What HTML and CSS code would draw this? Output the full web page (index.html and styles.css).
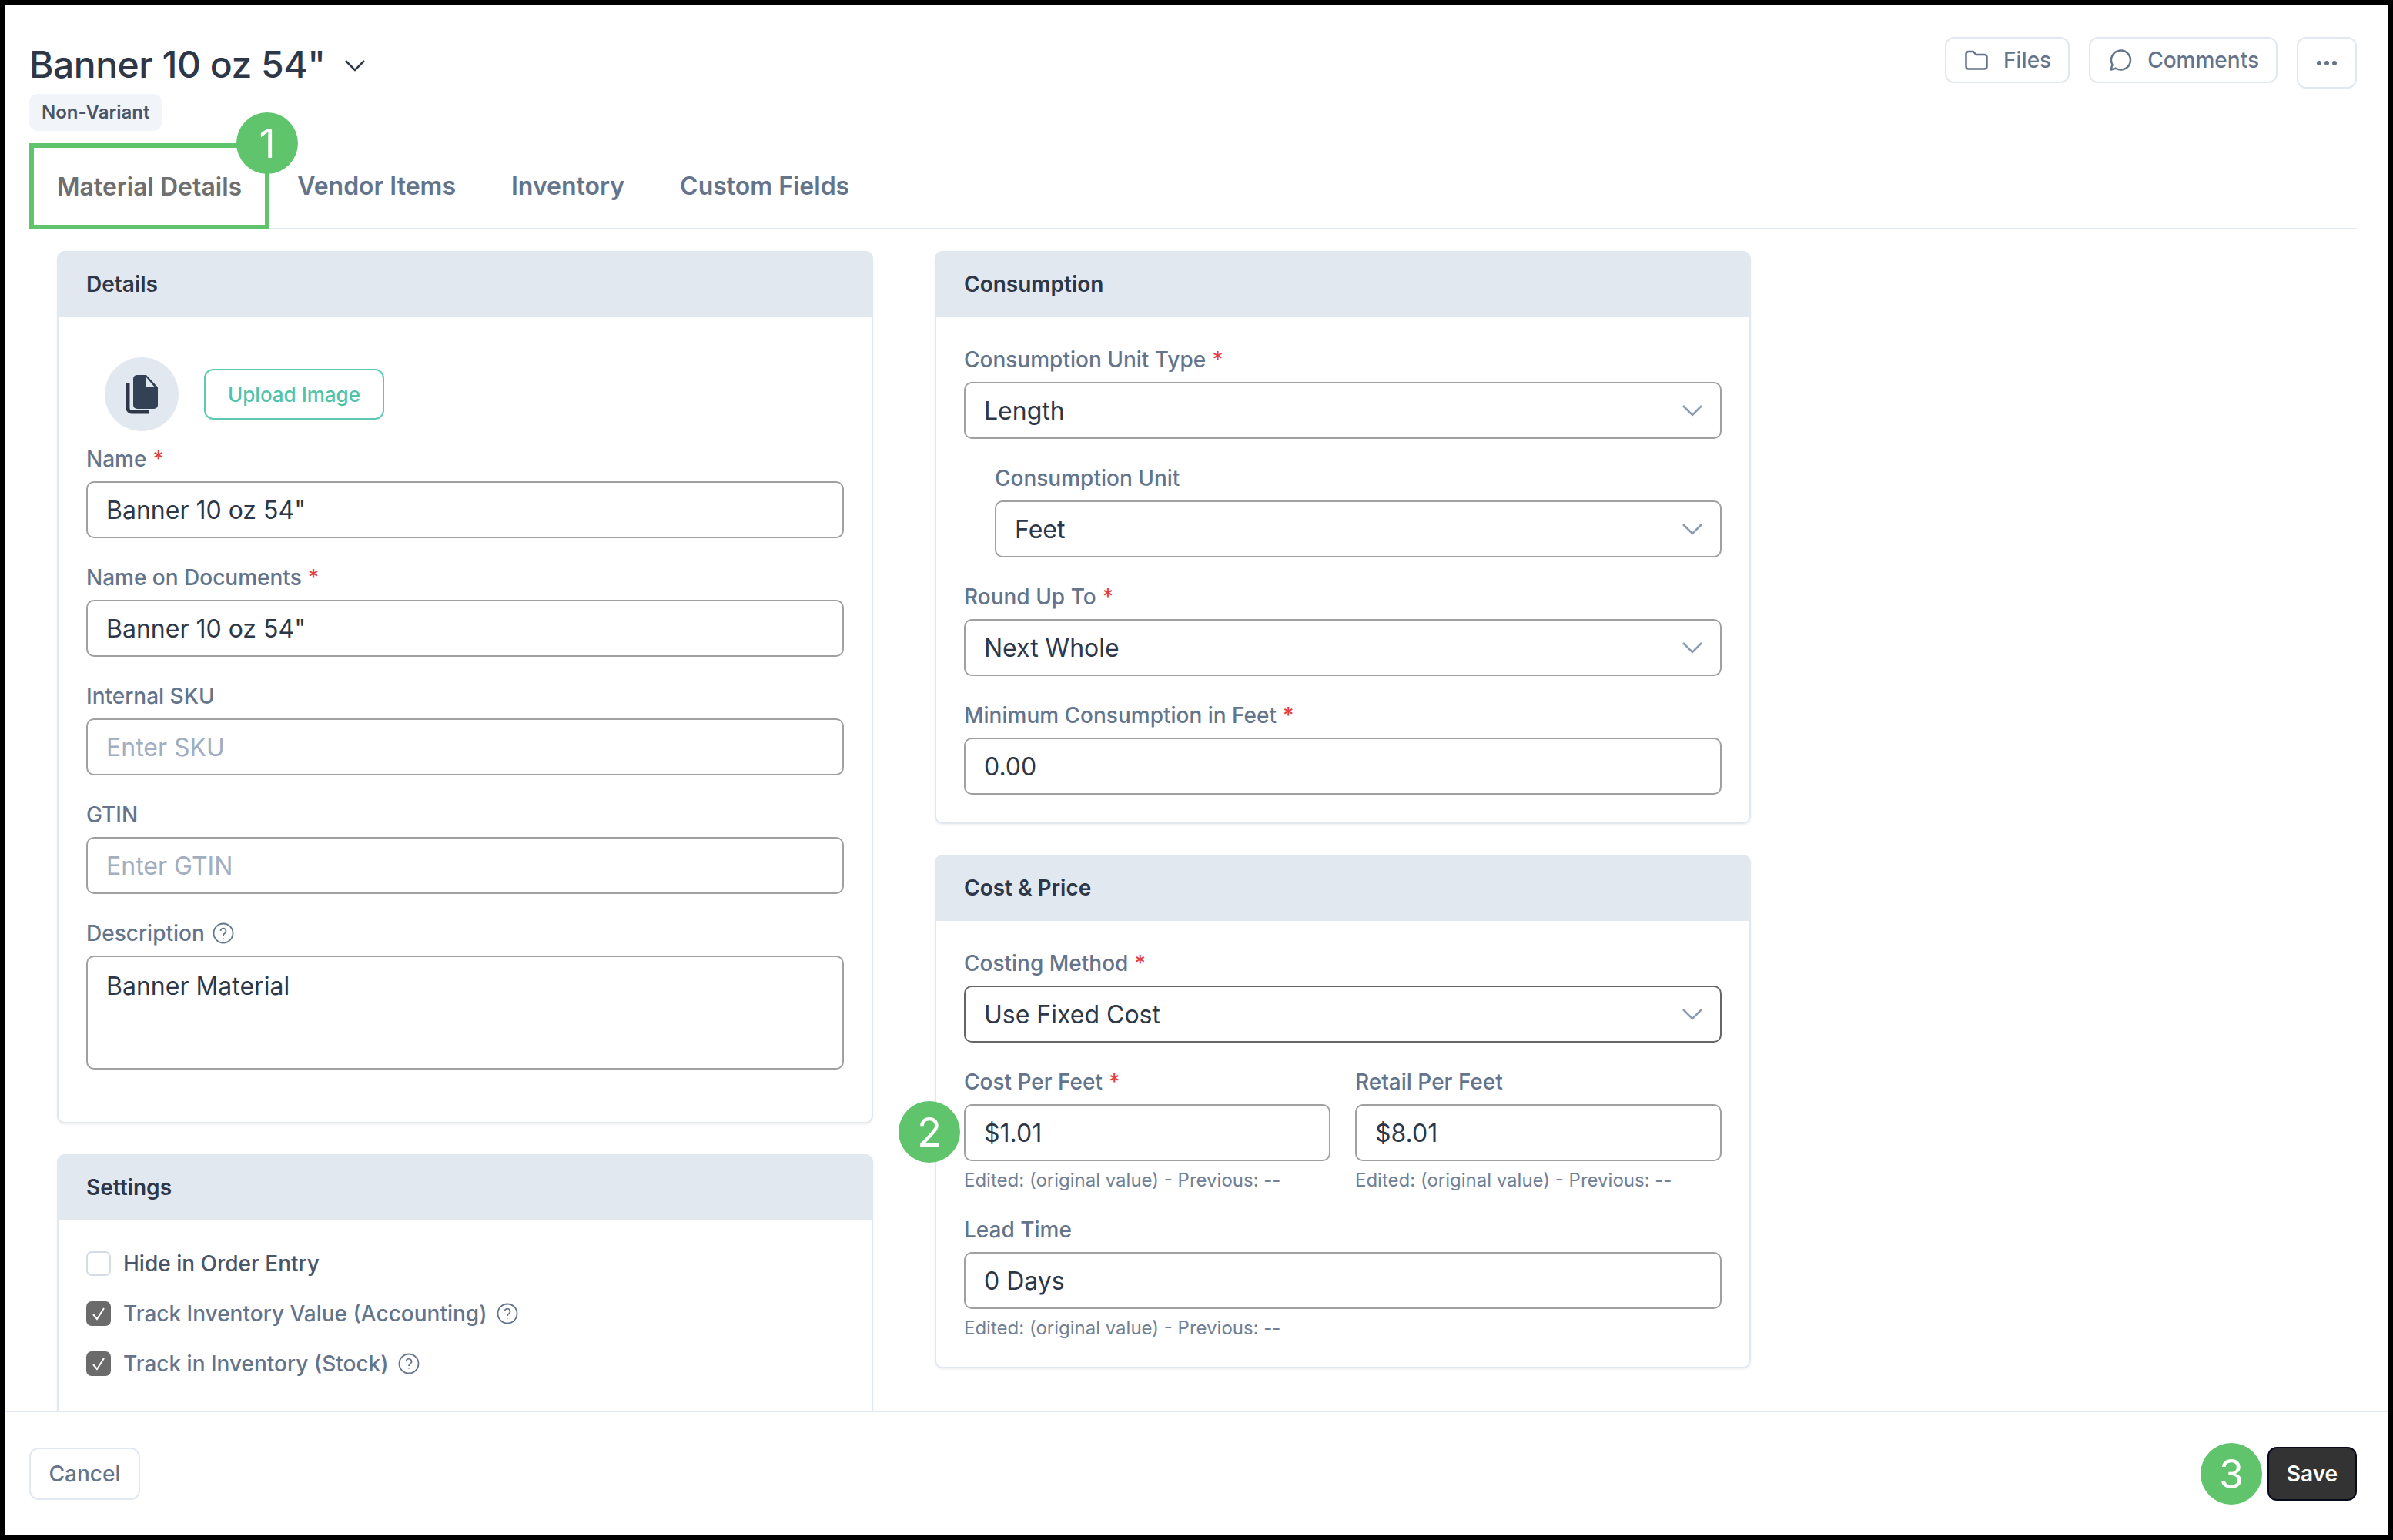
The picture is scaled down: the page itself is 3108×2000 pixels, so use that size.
FILE: index.html
```html
<!DOCTYPE html>
<html lang="en">
  <head>
    <meta charset="UTF-8" />
    <title>Banner 10 oz 54"</title>
    <link rel="stylesheet" href="styles.css">
  </head>
  <body>
    <div class="frame">
      <header class="top">
        <div class="top-row">
          <div class="title-group">
            <div class="title-line">
              <h1 class="title">Banner 10 oz 54"</h1>
              <svg class="title-chevron" viewBox="0 0 28 16"><path d="M2 2l12 12L26 2" /></svg>
            </div>
            <span class="badge">Non-Variant</span>
          </div>
          <div class="actions">
            <button class="btn btn-icon">
              <svg class="btn-svg" viewBox="0 0 30 26"><path d="M1.5 5a3 3 0 0 1 3-3h6.5l3.5 4h11a3 3 0 0 1 3 3v12.500a3 3 0 0 1-3 3h-21a3 3 0 0 1-3-3z" /></svg>
              Files
            </button>
            <button class="btn btn-icon">
              <svg class="btn-svg" viewBox="0 0 30 30"><path d="M2.500 27.500l2-6.500a12.500 12.500 0 1 1 4.500 4.700z" /></svg>
              Comments
            </button>
            <button class="btn btn-more" aria-label="More">
              <span class="dot"></span><span class="dot"></span><span class="dot"></span>
            </button>
          </div>
        </div>
        <nav class="tabs">
          <a class="tab tab-active">Material Details<span class="step step-one">1</span></a>
          <a class="tab">Vendor Items</a>
          <a class="tab">Inventory</a>
          <a class="tab">Custom Fields</a>
        </nav>
      </header>

      <main class="content">
        <div class="column">
          <section class="card">
            <h2 class="card-head">Details</h2>
            <div class="card-body card-details">
              <div class="upload-row">
                <div class="avatar">
                  <svg class="avatar-svg" viewBox="0 0 42 51">
                    <path class="sheet-back" d="M3 11v32a5 5 0 0 0 5 5h22" />
                    <path class="sheet-front" d="M15 0h12l15 16v23a5 5 0 0 1-5 5H15a5 5 0 0 1-5-5V5a5 5 0 0 1 5-5z" />
                    <path class="sheet-fold" d="M27 3l11 13H27z" />
                  </svg>
                </div>
                <button class="btn-upload">Upload Image</button>
              </div>
              <div class="field">
                <label class="label">Name <em>*</em></label>
                <div class="input">Banner 10 oz 54"</div>
              </div>
              <div class="field">
                <label class="label">Name on Documents <em>*</em></label>
                <div class="input">Banner 10 oz 54"</div>
              </div>
              <div class="field">
                <label class="label">Internal SKU</label>
                <div class="input placeholder">Enter SKU</div>
              </div>
              <div class="field">
                <label class="label">GTIN</label>
                <div class="input placeholder">Enter GTIN</div>
              </div>
              <div class="field field-desc">
                <label class="label">Description
                  <svg class="help" viewBox="0 0 28 28"><circle cx="14" cy="14" r="12.500" /><path d="M10.500 11a3.500 3.500 0 1 1 5.500 3c-1.300.8-2 1.500-2 3" /><path d="M14 20.500v.5" /></svg>
                </label>
                <div class="input textarea">Banner Material</div>
              </div>
            </div>
          </section>

          <section class="card">
            <h2 class="card-head">Settings</h2>
            <div class="card-body card-settings">
              <div class="check-row">
                <span class="check"></span>
                <span class="check-label check-label-dark">Hide in Order Entry</span>
              </div>
              <div class="check-row">
                <span class="check check-on"><svg viewBox="0 0 32 32"><path d="M9 17l5 6L23 9" /></svg></span>
                <span class="check-label">Track Inventory Value (Accounting)</span>
                <svg class="help" viewBox="0 0 28 28"><circle cx="14" cy="14" r="12.500" /><path d="M10.500 11a3.500 3.500 0 1 1 5.500 3c-1.300.8-2 1.500-2 3" /><path d="M14 20.500v.5" /></svg>
              </div>
              <div class="check-row">
                <span class="check check-on"><svg viewBox="0 0 32 32"><path d="M9 17l5 6L23 9" /></svg></span>
                <span class="check-label">Track in Inventory (Stock)</span>
                <svg class="help" viewBox="0 0 28 28"><circle cx="14" cy="14" r="12.500" /><path d="M10.500 11a3.500 3.500 0 1 1 5.500 3c-1.300.8-2 1.500-2 3" /><path d="M14 20.500v.5" /></svg>
              </div>
            </div>
          </section>
        </div>

        <div class="column">
          <section class="card">
            <h2 class="card-head">Consumption</h2>
            <div class="card-body card-form">
              <div class="field">
                <label class="label">Consumption Unit Type <em>*</em></label>
                <div class="input select">Length<svg class="chevron" viewBox="0 0 28 16"><path d="M2 2l12 12L26 2" /></svg></div>
              </div>
              <div class="field field-nested">
                <label class="label">Consumption Unit</label>
                <div class="input select">Feet<svg class="chevron" viewBox="0 0 28 16"><path d="M2 2l12 12L26 2" /></svg></div>
              </div>
              <div class="field">
                <label class="label">Round Up To <em>*</em></label>
                <div class="input select">Next Whole<svg class="chevron" viewBox="0 0 28 16"><path d="M2 2l12 12L26 2" /></svg></div>
              </div>
              <div class="field">
                <label class="label">Minimum Consumption in Feet <em>*</em></label>
                <div class="input">0.00</div>
              </div>
            </div>
          </section>

          <section class="card">
            <h2 class="card-head">Cost &amp; Price</h2>
            <div class="card-body card-form">
              <div class="field">
                <label class="label">Costing Method <em>*</em></label>
                <div class="input select input-focus">Use Fixed Cost<svg class="chevron" viewBox="0 0 28 16"><path d="M2 2l12 12L26 2" /></svg></div>
              </div>
              <div class="field-pair">
                <div class="field">
                  <label class="label">Cost Per Feet <em>*</em></label>
                  <div class="input">$1.01<span class="step step-two">2</span></div>
                  <p class="hint">Edited: (original value) - Previous: --</p>
                </div>
                <div class="field">
                  <label class="label">Retail Per Feet</label>
                  <div class="input">$8.01</div>
                  <p class="hint">Edited: (original value) - Previous: --</p>
                </div>
              </div>
              <div class="field field-last">
                <label class="label">Lead Time</label>
                <div class="input">0 Days</div>
                <p class="hint">Edited: (original value) - Previous: --</p>
              </div>
            </div>
          </section>
        </div>
      </main>

      <footer class="footer">
        <button class="btn btn-cancel">Cancel</button>
        <div class="footer-right">
          <span class="step step-three">3</span>
          <button class="btn-save">Save</button>
        </div>
      </footer>
    </div>
  </body>
</html>
```

FILE: styles.css
```css
* {
  padding: 0;
  margin: 0;
  box-sizing: border-box;
  font-family: Inter, "Noto Sans", sans-serif;
}
body {
  background-color: white;
}
button {
  background: white;
  cursor: pointer;
}
.frame {
  height: 2000px;
  border: 6px solid black;
  display: flex;
  flex-direction: column;
  overflow: hidden;
  background-color: white;
}

/* header */
.top {
  padding: 42px 41px 0 32px;
}
.top-row {
  display: flex;
  justify-content: space-between;
  align-items: flex-start;
}
.title-line {
  display: flex;
  align-items: center;
  gap: 24px;
  height: 70px;
}
.title {
  font-size: 48px;
  font-weight: 500;
  color: #2d3748;
  letter-spacing: -0.5px;
}
.title-chevron {
  width: 28px;
  height: 16px;
  margin-top: 4px;
  fill: none;
  stroke: #2d3748;
  stroke-width: 2.5;
}
.badge {
  display: inline-block;
  margin-top: 4px;
  height: 48px;
  line-height: 48px;
  padding: 0 16px;
  background-color: #f1f5f9;
  border-radius: 10px;
  font-size: 24px;
  font-weight: 600;
  color: #4a5568;
}
.actions {
  display: flex;
  gap: 25px;
  align-items: flex-start;
}
.btn {
  border: 2px solid #e2e8f0;
  border-radius: 12px;
  color: #64748b;
  font-size: 28px;
  font-weight: 500;
}
.btn-icon {
  display: flex;
  align-items: center;
  gap: 20px;
  height: 60px;
  padding: 0 22px 0 24px;
}
.btn-svg {
  width: 30px;
  height: 30px;
  fill: none;
  stroke: #64748b;
  stroke-width: 2.5;
  stroke-linejoin: round;
}
.btn-more {
  display: flex;
  justify-content: center;
  align-items: center;
  gap: 4px;
  width: 78px;
  height: 67px;
}
.dot {
  width: 6px;
  height: 6px;
  border-radius: 50%;
  background-color: #64748b;
}

/* tabs */
.tabs {
  display: flex;
  height: 128px;
  margin-top: 0;
  align-items: flex-end;
  border-bottom: 2px solid #e2e8f0;
}
.tab {
  display: flex;
  align-items: center;
  height: 110px;
  padding: 0 36px;
  font-size: 32px;
  font-weight: 600;
  color: #64748b;
}
.tab-active {
  position: relative;
  height: 112px;
  margin-bottom: -2px;
  margin-right: 0;
  padding: 0 30px;
  border: 6px solid #5fc46c;
  color: #6f6f6f;
}
.step {
  display: flex;
  justify-content: center;
  align-items: center;
  width: 80px;
  height: 80px;
  border-radius: 50%;
  background-color: #5fc46c;
  color: white;
  font-size: 52px;
  font-weight: 400;
}
.step-one {
  position: absolute;
  top: -46px;
  right: -43px;
}
.step-two {
  position: absolute;
  top: -6px;
  left: -87px;
}

/* main */
.content {
  flex: 1;
  min-height: 0;
  overflow: hidden;
  display: grid;
  grid-template-columns: 1060px 1060px;
  column-gap: 80px;
  align-content: start;
  padding: 28px 0 0 68px;
}
.column {
  display: flex;
  flex-direction: column;
  gap: 40px;
}
.card {
  border: 2px solid #e2e8f0;
  border-radius: 10px;
  box-shadow: 0 2px 3px rgba(30, 41, 59, 0.06);
  background-color: white;
}
.card-head {
  display: flex;
  align-items: center;
  height: 86px;
  margin: -2px -2px 0 -2px;
  padding-left: 38px;
  background-color: #e2e8f0;
  border-radius: 10px 10px 0 0;
  font-size: 28px;
  font-weight: 600;
  color: #2d3748;
}
.card-body {
  padding: 0 36px;
}
.card-form {
  padding-top: 35px;
  padding-bottom: 36px;
}
.card-details {
  padding-top: 52px;
  padding-bottom: 68px;
}
.card-settings {
  padding-top: 40px;
  padding-bottom: 60px;
  display: flex;
  flex-direction: column;
  gap: 33px;
}

/* details image */
.upload-row {
  display: flex;
  align-items: center;
  gap: 33px;
  padding-left: 24px;
  margin-bottom: 16px;
}
.avatar {
  display: flex;
  justify-content: center;
  align-items: center;
  width: 96px;
  height: 96px;
  border-radius: 50%;
  background-color: #e2e8f0;
}
.avatar-svg {
  width: 42px;
  height: 51px;
}
.sheet-back {
  fill: none;
  stroke: #2d3748;
  stroke-width: 5;
}
.sheet-front {
  fill: #334155;
}
.sheet-fold {
  fill: #e2e8f0;
}
.btn-upload {
  width: 234px;
  height: 66px;
  border: 2px solid #5cc9b0;
  border-radius: 12px;
  font-size: 26px;
  font-weight: 500;
  color: #4fc3a8;
}

/* form fields */
.field {
  margin-bottom: 31px;
}
.field-nested {
  margin-left: 40px;
}
.card-form > .field:last-child {
  margin-bottom: 0;
}
.field-desc {
  margin-bottom: 0;
}
.field-pair {
  display: grid;
  grid-template-columns: 1fr 1fr;
  column-gap: 32px;
}
.field-pair .field {
  margin-bottom: 30px;
}
.card-form > .field-last {
  margin-bottom: 27px;
}
.label {
  display: flex;
  align-items: center;
  gap: 10px;
  height: 40px;
  margin-bottom: 9px;
  font-size: 28px;
  font-weight: 500;
  color: #64748b;
}
.label em {
  font-style: normal;
  color: #e53e3e;
  margin-left: -2px;
}
.input {
  position: relative;
  display: flex;
  align-items: center;
  height: 74px;
  padding: 0 24px;
  border: 2px solid #a0a0a0;
  border-radius: 10px;
  font-size: 32px;
  color: #2d3748;
  background-color: white;
}
.placeholder {
  color: #a0aec0;
}
.textarea {
  height: 148px;
  align-items: flex-start;
  padding-top: 18px;
}
.input-focus {
  border-color: #666;
}
.select {
  justify-content: space-between;
}
.chevron {
  width: 28px;
  height: 16px;
  margin-right: -2px;
  fill: none;
  stroke: #8a9bb5;
  stroke-width: 2.5;
}
.hint {
  margin-top: 10px;
  font-size: 24px;
  color: #718096;
}
.help {
  width: 28px;
  height: 28px;
  fill: none;
  stroke: #64748b;
  stroke-width: 1.8;
}

/* checkboxes */
.check-row {
  display: flex;
  align-items: center;
  height: 32px;
}
.check {
  width: 32px;
  height: 32px;
  border: 2px solid #d5dce6;
  border-radius: 7px;
  background-color: white;
  margin-right: 16px;
}
.check-on {
  border: none;
  background-color: #6b6b6b;
}
.check-on svg {
  display: block;
  width: 32px;
  height: 32px;
  fill: none;
  stroke: white;
  stroke-width: 2;
}
.check-label {
  font-size: 28px;
  font-weight: 500;
  color: #64748b;
  margin-right: 12px;
}
.check-label-dark {
  color: #4a5568;
}

/* footer */
.footer {
  flex-shrink: 0;
  display: flex;
  justify-content: space-between;
  align-items: center;
  height: 162px;
  padding: 0 41px 0 32px;
  border-top: 2px solid #e2e8f0;
  background-color: white;
}
.btn-cancel {
  width: 144px;
  height: 68px;
}
.footer-right {
  display: flex;
  align-items: center;
  gap: 7px;
}
.btn-save {
  width: 116px;
  height: 70px;
  background-color: #333;
  border: 2px solid #0a0a1e;
  border-radius: 12px;
  color: white;
  font-size: 28px;
  font-weight: 600;
}
```
